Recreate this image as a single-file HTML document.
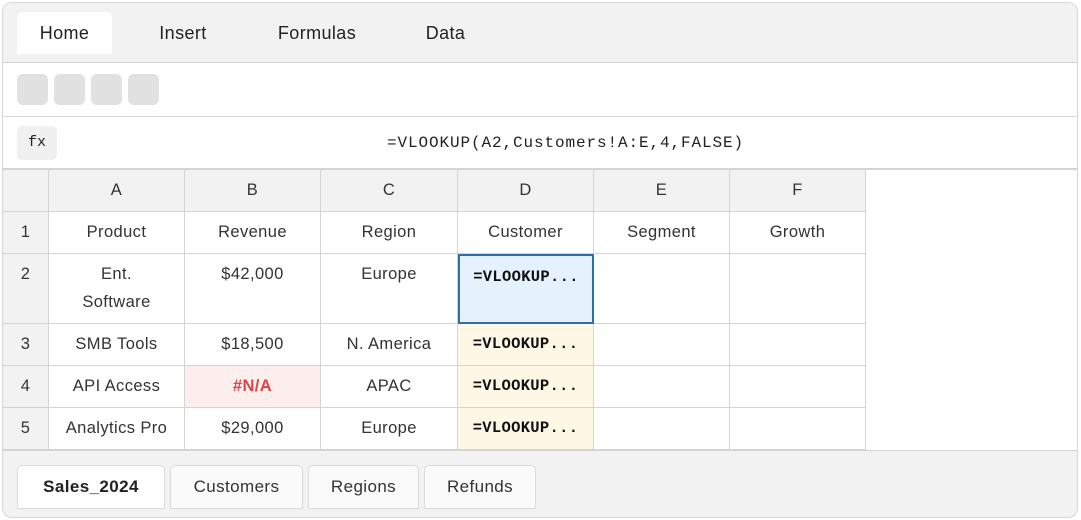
<!DOCTYPE html>
<html><head><style>
*{box-sizing:border-box;margin:0;padding:0}
body{width:1081px;height:520px;background:#fff;font-family:"Liberation Sans",sans-serif;color:#222;overflow:hidden;position:relative}
.wrap{position:absolute;left:2px;top:2px;width:1076px;height:516px;border:1px solid #d6d6d6;border-radius:10px;overflow:hidden;background:#fff}
.abs{position:absolute}
.tabbar{left:0;top:0;width:1076px;height:60px;background:#f2f2f2;border-bottom:1px solid #d4d4d4}
.tab{position:absolute;top:9px;height:42px;line-height:42px;font-size:18px;text-align:center;color:#222;letter-spacing:0.4px}
.btn{position:absolute;top:71px;width:31px;height:31px;background:#e1e1e1;border-radius:6px}
.fbar{left:0;top:113px;width:1076px;height:54px;border-top:1px solid #d9d9d9;border-bottom:2px solid #d4d4d4}
.fx{position:absolute;left:14px;top:9px;width:40px;height:34px;background:#f0f0f0;border-radius:5px;font-family:"Liberation Mono",monospace;font-size:15px;line-height:34px;text-align:center}
.ftxt{position:absolute;left:300px;width:525px;top:0;line-height:52px;text-align:center;font-family:"Liberation Mono",monospace;font-size:16px;letter-spacing:0.9px;color:#222}
.c{position:absolute;border-right:1px solid #d4d4d4;border-bottom:1px solid #d4d4d4;text-align:center;font-size:16.5px;color:#333;padding-top:11px;letter-spacing:0.4px}
.h{background:#f2f2f2}
.m{font-family:"Liberation Mono",monospace;font-weight:bold;font-size:15.5px;background:#fdf8e6;color:#111;letter-spacing:0.3px}
.bottom{left:0;top:447px;width:1076px;height:70px;background:#f2f2f2;border-top:1px solid #d4d4d4}
.st{position:absolute;top:14px;height:44px;line-height:42px;background:#fafafa;border:1px solid #dadada;border-radius:5px 5px 0 0;text-align:center;font-size:17px;color:#333;letter-spacing:0.4px}
</style></head><body>
<div class="wrap">
<div class="abs tabbar">
<div class="tab" style="left:14px;width:95px;background:#fff;border-radius:6px 6px 0 0">Home</div>
<div class="tab" style="left:135px;width:90px">Insert</div>
<div class="tab" style="left:255px;width:118px">Formulas</div>
<div class="tab" style="left:400px;width:85px">Data</div>
</div>
<div class="btn" style="left:14px"></div>
<div class="btn" style="left:51px"></div>
<div class="btn" style="left:88px"></div>
<div class="btn" style="left:125px"></div>
<div class="abs fbar"><div class="fx">fx</div><div class="ftxt">=VLOOKUP(A2,Customers!A:E,4,FALSE)</div></div>

<div class="c h" style="left:0;top:167px;width:46px;height:42px"></div>
<div class="c h" style="left:46px;top:167px;width:136px;height:42px">A</div>
<div class="c h" style="left:182px;top:167px;width:136px;height:42px">B</div>
<div class="c h" style="left:318px;top:167px;width:137px;height:42px">C</div>
<div class="c h" style="left:455px;top:167px;width:136px;height:42px">D</div>
<div class="c h" style="left:591px;top:167px;width:136px;height:42px">E</div>
<div class="c h" style="left:727px;top:167px;width:136px;height:42px">F</div>

<div class="c h" style="left:0;top:209px;width:46px;height:42px">1</div>
<div class="c" style="left:46px;top:209px;width:136px;height:42px">Product</div>
<div class="c" style="left:182px;top:209px;width:136px;height:42px">Revenue</div>
<div class="c" style="left:318px;top:209px;width:137px;height:42px">Region</div>
<div class="c" style="left:455px;top:209px;width:136px;height:42px">Customer</div>
<div class="c" style="left:591px;top:209px;width:136px;height:42px">Segment</div>
<div class="c" style="left:727px;top:209px;width:136px;height:42px">Growth</div>

<div class="c h" style="left:0;top:251px;width:46px;height:70px">2</div>
<div class="c" style="left:46px;top:251px;width:136px;height:70px;line-height:28px;padding-top:6px">Ent.<br>Software</div>
<div class="c" style="left:182px;top:251px;width:136px;height:70px">$42,000</div>
<div class="c" style="left:318px;top:251px;width:137px;height:70px">Europe</div>
<div class="c m" style="left:455px;top:251px;width:136px;height:70px;background:#e5f1fd;border:2px solid #2f6db0;padding-top:12px">=VLOOKUP...</div>
<div class="c" style="left:591px;top:251px;width:136px;height:70px"></div>
<div class="c" style="left:727px;top:251px;width:136px;height:70px"></div>

<div class="c h" style="left:0;top:321px;width:46px;height:42px">3</div>
<div class="c" style="left:46px;top:321px;width:136px;height:42px">SMB Tools</div>
<div class="c" style="left:182px;top:321px;width:136px;height:42px">$18,500</div>
<div class="c" style="left:318px;top:321px;width:137px;height:42px">N. America</div>
<div class="c m" style="left:455px;top:321px;width:136px;height:42px">=VLOOKUP...</div>
<div class="c" style="left:591px;top:321px;width:136px;height:42px"></div>
<div class="c" style="left:727px;top:321px;width:136px;height:42px"></div>

<div class="c h" style="left:0;top:363px;width:46px;height:42px">4</div>
<div class="c" style="left:46px;top:363px;width:136px;height:42px">API Access</div>
<div class="c" style="left:182px;top:363px;width:136px;height:42px;background:#fdeeee;color:#d9454a;font-weight:bold">#N/A</div>
<div class="c" style="left:318px;top:363px;width:137px;height:42px">APAC</div>
<div class="c m" style="left:455px;top:363px;width:136px;height:42px">=VLOOKUP...</div>
<div class="c" style="left:591px;top:363px;width:136px;height:42px"></div>
<div class="c" style="left:727px;top:363px;width:136px;height:42px"></div>

<div class="c h" style="left:0;top:405px;width:46px;height:42px">5</div>
<div class="c" style="left:46px;top:405px;width:136px;height:42px">Analytics Pro</div>
<div class="c" style="left:182px;top:405px;width:136px;height:42px">$29,000</div>
<div class="c" style="left:318px;top:405px;width:137px;height:42px">Europe</div>
<div class="c m" style="left:455px;top:405px;width:136px;height:42px">=VLOOKUP...</div>
<div class="c" style="left:591px;top:405px;width:136px;height:42px"></div>
<div class="c" style="left:727px;top:405px;width:136px;height:42px"></div>

<div class="abs bottom">
<div class="st" style="left:14px;width:148px;background:#fff;font-weight:bold;color:#222">Sales_2024</div>
<div class="st" style="left:167px;width:133px">Customers</div>
<div class="st" style="left:305px;width:111px">Regions</div>
<div class="st" style="left:421px;width:112px">Refunds</div>
</div>
</div>
</body></html>
